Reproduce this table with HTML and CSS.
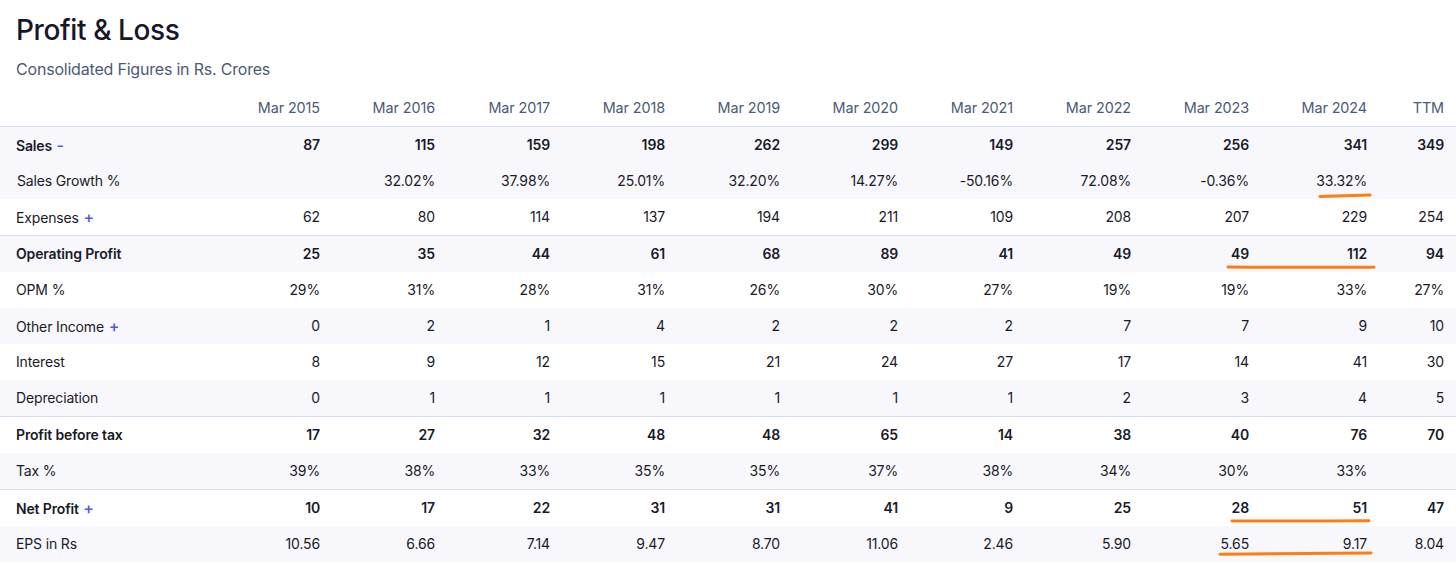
FILE: index.html
```html
<!DOCTYPE html>
<html lang="en">
<head>
<meta charset="utf-8">
<title>Profit &amp; Loss</title>
<link rel="stylesheet" href="styles.css">
</head>
<body>
<div class="page">
  <header class="head">
    <h1 class="title">Profit &amp; Loss</h1>
    <p class="sub">Consolidated Figures in Rs. Crores</p>
  </header>
  <table class="pl">
    <colgroup>
      <col class="c-label">
      <col class="c-n"><col class="c-n"><col class="c-n"><col class="c-n"><col class="c-n">
      <col class="c-w"><col class="c-n"><col class="c-w"><col class="c-w"><col class="c-w">
      <col class="c-ttm">
    </colgroup>
    <thead>
      <tr>
        <th class="lbl"></th>
        <th>Mar 2015</th><th>Mar 2016</th><th>Mar 2017</th><th>Mar 2018</th><th>Mar 2019</th>
        <th>Mar 2020</th><th>Mar 2021</th><th>Mar 2022</th><th>Mar 2023</th><th>Mar 2024</th><th>TTM</th>
      </tr>
    </thead>
    <tbody>
      <tr class="strong stripe">
        <td class="lbl">Sales <span class="tog">-</span></td>
        <td>87</td><td>115</td><td>159</td><td>198</td><td>262</td><td>299</td><td>149</td><td>257</td><td>256</td><td>341</td><td>349</td>
      </tr>
      <tr class="stripe">
        <td class="lbl sublbl">Sales Growth %</td>
        <td></td><td>32.02%</td><td>37.98%</td><td>25.01%</td><td>32.20%</td><td>14.27%</td><td>-50.16%</td><td>72.08%</td><td>-0.36%</td><td>33.32%</td><td></td>
      </tr>
      <tr>
        <td class="lbl">Expenses <span class="tog">+</span></td>
        <td>62</td><td>80</td><td>114</td><td>137</td><td>194</td><td>211</td><td>109</td><td>208</td><td>207</td><td>229</td><td>254</td>
      </tr>
      <tr class="strong stripe sep">
        <td class="lbl">Operating Profit</td>
        <td>25</td><td>35</td><td>44</td><td>61</td><td>68</td><td>89</td><td>41</td><td>49</td><td>49</td><td>112</td><td>94</td>
      </tr>
      <tr>
        <td class="lbl">OPM %</td>
        <td>29%</td><td>31%</td><td>28%</td><td>31%</td><td>26%</td><td>30%</td><td>27%</td><td>19%</td><td>19%</td><td>33%</td><td>27%</td>
      </tr>
      <tr class="stripe">
        <td class="lbl">Other Income <span class="tog">+</span></td>
        <td>0</td><td>2</td><td>1</td><td>4</td><td>2</td><td>2</td><td>2</td><td>7</td><td>7</td><td>9</td><td>10</td>
      </tr>
      <tr>
        <td class="lbl">Interest</td>
        <td>8</td><td>9</td><td>12</td><td>15</td><td>21</td><td>24</td><td>27</td><td>17</td><td>14</td><td>41</td><td>30</td>
      </tr>
      <tr class="stripe">
        <td class="lbl">Depreciation</td>
        <td>0</td><td>1</td><td>1</td><td>1</td><td>1</td><td>1</td><td>1</td><td>2</td><td>3</td><td>4</td><td>5</td>
      </tr>
      <tr class="strong sep">
        <td class="lbl">Profit before tax</td>
        <td>17</td><td>27</td><td>32</td><td>48</td><td>48</td><td>65</td><td>14</td><td>38</td><td>40</td><td>76</td><td>70</td>
      </tr>
      <tr class="stripe">
        <td class="lbl">Tax %</td>
        <td>39%</td><td>38%</td><td>33%</td><td>35%</td><td>35%</td><td>37%</td><td>38%</td><td>34%</td><td>30%</td><td>33%</td><td></td>
      </tr>
      <tr class="strong sep">
        <td class="lbl">Net Profit <span class="tog">+</span></td>
        <td>10</td><td>17</td><td>22</td><td>31</td><td>31</td><td>41</td><td>9</td><td>25</td><td>28</td><td>51</td><td>47</td>
      </tr>
      <tr class="stripe">
        <td class="lbl">EPS in Rs</td>
        <td>10.56</td><td>6.66</td><td>7.14</td><td>9.47</td><td>8.70</td><td>11.06</td><td>2.46</td><td>5.90</td><td>5.65</td><td>9.17</td><td>8.04</td>
      </tr>
    </tbody>
  </table>
  <svg class="marks" width="1456" height="563" viewBox="0 0 1456 563" aria-hidden="true">
    <path d="M1320 196.5 Q1345 195.6 1370 195" />
    <path d="M1228 267 Q1300 267.6 1374 267.2" />
    <path d="M1232 521 Q1300 521.3 1369 520.8" />
    <path d="M1220 554.2 Q1295 553.6 1371 553" />
  </svg>
</div>
</body>
</html>
```

FILE: styles.css
```css
* { box-sizing: border-box; }

html, body {
  margin: 0;
  padding: 0;
  background: #ffffff;
}

body {
  font-family: Inter, "Noto Sans", "Liberation Sans", sans-serif;
  color: #1b1b2b;
  overflow: hidden;
}

.page {
  position: relative;
  width: 1456px;
  height: 563px;
  overflow: hidden;
}

.head {
  padding: 12px 16px 0;
}

.title {
  margin: 0;
  font-size: 28px;
  line-height: 36px;
  font-weight: 500;
  color: #17172a;
  letter-spacing: -0.4px;
}

.sub {
  margin: 9px 0 0;
  font-size: 16px;
  line-height: 24px;
  color: #4c5a73;
  letter-spacing: -0.2px;
}

.pl {
  width: 1456px;
  table-layout: fixed;
  border-collapse: separate;
  border-spacing: 0;
  font-size: 14px;
  letter-spacing: -0.15px;
}

.c-label { width: 217px; }
.c-n { width: 115px; }
.c-w { width: 118px; }
.c-ttm { width: 77px; }

.pl th {
  box-sizing: content-box;
  font-weight: 400;
  font-size: 14.4px;
  letter-spacing: -0.1px;
  color: #4c5a73;
  text-align: right;
  padding: 17px 12px 8px 0;
  line-height: 20px;
  border-bottom: 1px solid #d6dfee;
  white-space: nowrap;
}

.pl td {
  box-sizing: content-box;
  height: 36px;
  padding: 0 12px 0 0;
  text-align: right;
  vertical-align: middle;
  line-height: 20px;
  white-space: nowrap;
  color: #1a1a28;
}

.pl td.lbl,
.pl th.lbl {
  text-align: left;
  padding-left: 16px;
}

.pl td.sublbl {
  padding-left: 17px;
}

.stripe td {
  background: #f7f7fc;
}

.strong td {
  font-weight: 600;
}

.sep td {
  border-top: 1px solid #d6dfee;
}

.tog {
  color: #5552f5;
  font-size: 16px;
  font-weight: 500;
  margin-left: 1px;
}

.marks {
  position: absolute;
  left: 0;
  top: 0;
  pointer-events: none;
}

.marks path {
  fill: none;
  stroke: #ff7d10;
  stroke-width: 3;
  stroke-linecap: round;
}
```
